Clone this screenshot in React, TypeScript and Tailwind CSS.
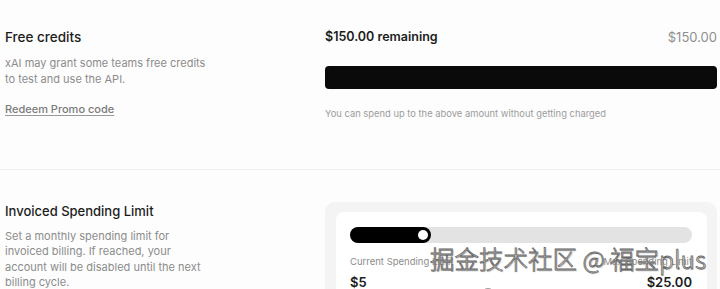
import React from "react";

export default function App() {
  return (
    <div className="relative w-[720px] h-[289px] overflow-hidden bg-[#fdfdfd] font-['Inter',sans-serif]">
      {/* Section 1 */}
      <div className="grid grid-cols-[320px_1fr] pl-[5px] pr-[3px] pt-[29px] pb-[48px] border-b border-[#efefef]">
        <div className="flex flex-col">
          <div className="text-[13.5px] leading-[16px] font-medium text-[#1c1c1c]">Free credits</div>
          <p className="mt-[10px] w-[206px] text-[11px] leading-[16px] text-[#8c8c8c]">
            xAI may grant some teams free credits to test and use the API.
          </p>
          <a className="mt-[14px] w-fit text-[11px] leading-[16px] font-medium text-[#7a7a7a] underline underline-offset-2 decoration-[#9a9a9a]">
            Redeem Promo code
          </a>
        </div>
        <div className="flex flex-col">
          <div className="flex items-center justify-between">
            <span className="text-[12.5px] leading-[16px] font-semibold text-[#1c1c1c]">$150.00 remaining</span>
            <span className="text-[13px] leading-[16px] text-[#8f8f8f]">$150.00</span>
          </div>
          <div className="mt-[21px] h-[23px] w-full rounded-[4px] bg-[#0a0a0a]" />
          <p className="mt-[18px] text-[9.4px] leading-[14px] text-[#9c9c9c]">
            You can spend up to the above amount without getting charged
          </p>
        </div>
      </div>

      {/* Section 2 */}
      <div className="grid grid-cols-[320px_1fr] pl-[5px] pr-[3px] pt-[32px]">
        <div className="flex flex-col pt-[1px]">
          <div className="text-[13px] leading-[16px] font-medium text-[#1c1c1c]">Invoiced Spending Limit</div>
          <p className="mt-[10px] w-[206px] text-[11px] leading-[15.4px] text-[#8c8c8c]">
            Set a monthly spending limit for invoiced billing. If reached, your account will be disabled until the next billing cycle.
          </p>
        </div>
        <div className="rounded-[10px] bg-[#f4f4f4] pt-[10px] pl-[11px] pr-[10px]">
          <div className="rounded-[8px] bg-white pt-[15px] pl-[14px] pr-[15px] pb-[20px]">
            <div className="relative h-[16px] w-full rounded-full bg-[#e3e3e3]">
              <div className="flex h-[16px] w-[81px] items-center justify-end rounded-full bg-black pr-[3px]">
                <div className="h-[10px] w-[10px] rounded-full bg-white" />
              </div>
            </div>
            <div className="mt-[12px] flex items-center justify-between text-[9.5px] leading-[14px] text-[#8c8c8c]">
              <span>Current Spending Limit</span>
              <span>Max Spending Limit</span>
            </div>
            <div className="mt-[4px] flex items-center justify-between text-[13px] leading-[18px] font-semibold text-[#1c1c1c]">
              <span>$5</span>
              <span>$25.00</span>
            </div>
            <div className="ml-[130px] mt-[-3px] h-[16px] w-[16px] rounded-full border-[1.5px] border-[#9a9a9a]" />
          </div>
        </div>
      </div>

      {/* Watermark overlay */}
      <div className="pointer-events-none absolute left-[430px] top-[245px] whitespace-nowrap text-[24.5px] leading-[28px] font-light text-white font-['Noto_Sans_CJK_SC',sans-serif] [-webkit-text-stroke:0.8px_#666] [text-shadow:1px_1px_1px_rgba(0,0,0,0.25)]">
        掘金技术社区 @ 福宝plus
      </div>
    </div>
  );
}
